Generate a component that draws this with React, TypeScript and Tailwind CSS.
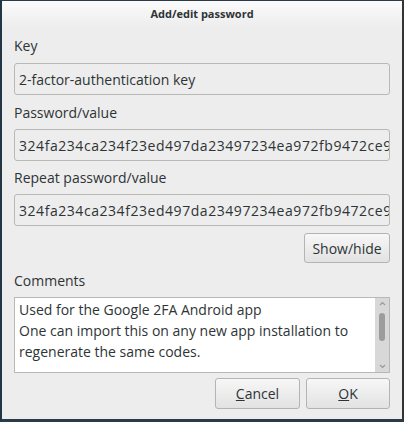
import React from 'react';

const font = { fontFamily: '"Open Sans", "DejaVu Sans", sans-serif' };

const Field = ({ value, mono = false }: { value: string; mono?: boolean }) => (
  <div className={`h-[32px] w-full rounded-[3px] border border-[#b8b8b4] bg-[#ededed] pl-[4px] flex items-center overflow-hidden whitespace-nowrap text-[14px] text-[#2e3436] ${mono ? 'tracking-[0.55px]' : ''}`}>
    {value}
  </div>
);

const Label = ({ children, className = '' }: { children: React.ReactNode; className?: string }) => (
  <div className={`text-[14px] text-[#2e3436] leading-[18px] ${className}`}>{children}</div>
);

const Button = ({ children, className = '' }: { children: React.ReactNode; className?: string }) => (
  <button className={`rounded-[3px] border border-[#b4b4b0] bg-gradient-to-b from-[#f7f7f7] to-[#e2e2e2] text-[14px] text-[#2e3436] flex items-center justify-center ${className}`}>
    {children}
  </button>
);

export default function App() {
  const hash = '324fa234ca234f23ed497da23497234ea972fb9472ce9';
  return (
    <div style={font} className="w-[404px] h-[422px] border-l-2 border-r-2 border-t border-b-[3px] border-l-[#233646] border-r-[#333] border-t-[#2b3a48] border-b-[#2b3a48] bg-[#ededed] flex flex-col">
      <div className="h-[26px] bg-gradient-to-b from-[#fbfbfb] to-[#ededed] flex items-center justify-center text-[11px] font-bold text-[#2e3436]">
        Add/edit password
      </div>
      <div className="flex flex-col px-[12px]">
        <Label className="mt-[10px] mb-[8px]">Key</Label>
        <Field value="2-factor-authentication key" />
        <Label className="mt-[9px] mb-[7px]">Password/value</Label>
        <Field value={hash} mono />
        <Label className="mt-[8px] mb-[7px]">Repeat password/value</Label>
        <Field value={hash} mono />
        <div className="flex justify-end mt-[7px]">
          <Button className="w-[86px] h-[30px]">Show/hide</Button>
        </div>
        <Label className="mt-[9px] mb-[7px]">Comments</Label>
        <div className="h-[76px] border border-[#b8b8b4] bg-white flex">
          <div className="flex-1 pl-[4px] pt-[1px] text-[14px] leading-[21px] text-[#2e3436] whitespace-nowrap overflow-hidden">
            <div>Used for the Google 2FA Android app</div>
            <div>One can import this on any new app installation to</div>
            <div>regenerate the same codes.</div>
          </div>
          <div className="w-[14px] bg-[#d8d8d8] flex flex-col items-center justify-between py-[3px]">
            <svg width="7" height="5" viewBox="0 0 7 5"><path d="M1 4 L3.5 1.5 L6 4" stroke="#9a9a9a" strokeWidth="1.2" fill="none" /></svg>
            <div className="w-[6px] h-[28px] rounded-full bg-[#9c9c9c] -mt-[6px] mb-[10px]" />
            <svg width="7" height="5" viewBox="0 0 7 5"><path d="M1 1 L3.5 3.5 L6 1" stroke="#9a9a9a" strokeWidth="1.2" fill="none" /></svg>
          </div>
        </div>
        <div className="flex justify-end gap-[6px] mt-[5px]">
          <Button className="w-[85px] h-[31px]"><span><span className="underline">C</span>ancel</span></Button>
          <Button className="w-[84px] h-[31px]"><span><span className="underline">O</span>K</span></Button>
        </div>
      </div>
    </div>
  );
}
